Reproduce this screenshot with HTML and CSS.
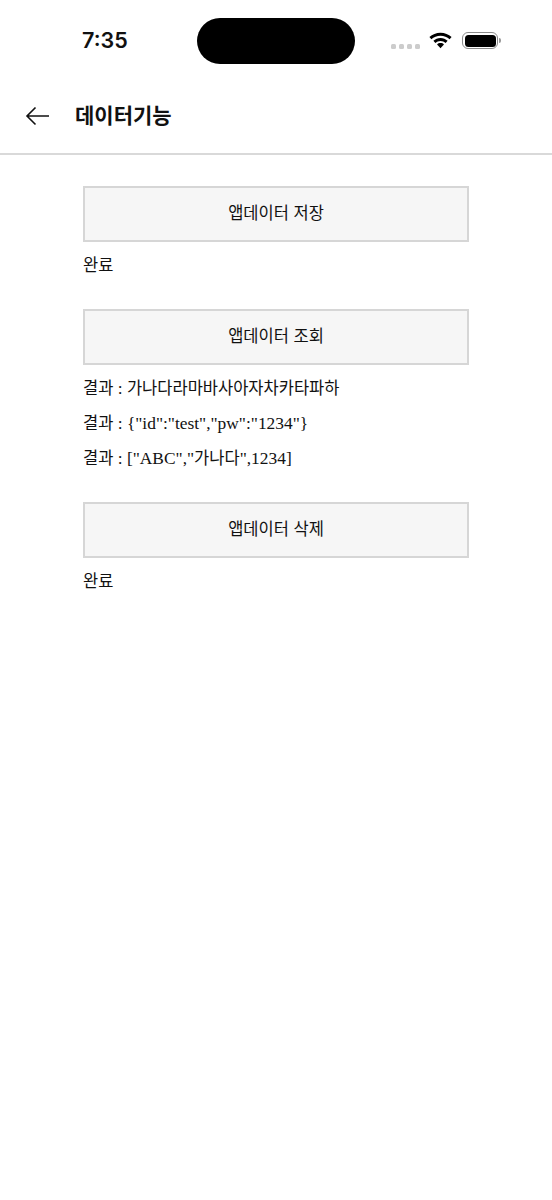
FILE: index.html
```html
<!DOCTYPE html>
<html lang="ko">
<head>
    <meta charset="UTF-8">
    <meta name="viewport" content="width=device-width, initial-scale=1.0">
    <title>데이터기능</title>
    <link rel="stylesheet" href="styles.css">
</head>
<body>
    <div class="status-bar">
        <span class="clock">7:35</span>
        <div class="notch"></div>
        <div class="status-icons">
            <div class="signal"><i></i><i></i><i></i><i></i></div>
            <svg class="wifi" width="23" height="17" viewBox="1 3 22 15">
                <path d="M12 3C7.900 3 4.200 4.600 1.400 7.200L3.300 9.300C5.600 7.200 8.600 5.900 12 5.900s6.400 1.300 8.700 3.400l1.900-2.100C19.800 4.600 16.100 3 12 3z"/>
                <path d="M12 8.100c-2.600 0-5 1-6.800 2.700l1.900 2.100c1.300-1.200 3-1.900 4.900-1.900s3.600.7 4.900 1.900l1.900-2.100C17 9.100 14.600 8.100 12 8.100z"/>
                <path d="M12 13c-1.300 0-2.500.5-3.300 1.300L12 18l3.300-3.700C14.500 13.500 13.300 13 12 13z"/>
            </svg>
            <div class="battery"><div class="battery-fill"></div></div>
            <div class="battery-cap"></div>
        </div>
    </div>

    <header class="app-header">
        <svg class="back" width="26" height="20" viewBox="0 0 26 20">
            <path d="M25 10H3M11.500 1.500L3 10l8.500 8.500" fill="none" stroke="#111" stroke-width="1.600"/>
        </svg>
        <h1>데이터기능</h1>
    </header>

    <main class="content">
        <section class="group">
            <button class="data-btn">앱데이터 저장</button>
            <p class="result"><span class="ko">완료</span></p>
        </section>
        <section class="group">
            <button class="data-btn">앱데이터 조회</button>
            <p class="result"><span class="ko">결과</span> : <span class="ko">가나다라마바사아자차카타파하</span></p>
            <p class="result"><span class="ko">결과</span> : {"id":"test","pw":"1234"}</p>
            <p class="result"><span class="ko">결과</span> : ["ABC","<span class="ko">가나다</span>",1234]</p>
        </section>
        <section class="group">
            <button class="data-btn">앱데이터 삭제</button>
            <p class="result"><span class="ko">완료</span></p>
        </section>
    </main>
</body>
</html>
```

FILE: styles.css
```css
body {
    margin: 0;
    background-color: #fff;
    color: #111;
    font-family: "Liberation Serif", "Noto Sans CJK KR", serif;
}

.status-bar {
    height: 82px;
    display: flex;
    align-items: flex-start;
    box-sizing: border-box;
    padding-top: 18px;
}

.clock {
    width: 197px;
    box-sizing: border-box;
    padding: 8px 0 0 82px;
    font-family: Inter, "Liberation Sans", sans-serif;
    font-size: 21.5px;
    font-weight: 600;
    line-height: 28px;
}

.notch {
    width: 158px;
    height: 46px;
    background-color: #000;
    border-radius: 23px;
}

.status-icons {
    display: flex;
    align-items: center;
    height: 46px;
    margin-left: 36px;
}

.signal {
    display: flex;
    gap: 3px;
    margin-top: 11px;
}

.signal i {
    width: 5px;
    height: 5px;
    background-color: #ccc;
    border-radius: 1.5px;
}

.wifi {
    margin-left: 9px;
    margin-top: -1px;
}

.battery {
    width: 36px;
    height: 17px;
    box-sizing: border-box;
    margin-left: 10px;
    margin-top: -1px;
    padding: 1.5px;
    border: 1.5px solid #8a8a8a;
    border-radius: 6px;
}

.battery-fill {
    height: 100%;
    background-color: #000;
    border-radius: 3.5px;
}

.battery-cap {
    width: 2px;
    height: 5px;
    margin-top: -1px;
    margin-left: 1px;
    background-color: #999;
    border-radius: 0 2px 2px 0;
}

.app-header {
    height: 73px;
    display: flex;
    align-items: center;
    box-sizing: border-box;
    padding: 0 0 5px 24px;
    border-bottom: 2px solid #d9d9d9;
}

.app-header h1 {
    margin: 0 0 2px 25px;
    font-family: "Noto Sans CJK KR", sans-serif;
    font-size: 21px;
    font-weight: 700;
    line-height: 30px;
}

.back {
    margin-top: 2px;
}

.content {
    padding: 31px 0 0 83px;
    width: 386px;
}

.group {
    margin-bottom: 26px;
}

.data-btn {
    display: block;
    width: 100%;
    height: 56px;
    padding: 0 0 4px;
    background-color: #f6f6f6;
    border: 2px solid #d6d6d6;
    color: #111;
    font-family: "Noto Sans CJK KR", sans-serif;
    font-size: 16.5px;
}

.result {
    margin: 0;
    height: 35px;
    font-size: 17.4px;
    line-height: 35px;
}

.ko {
    font-size: 16.5px;
}

.data-btn + .result {
    margin-top: 6px;
}
```
